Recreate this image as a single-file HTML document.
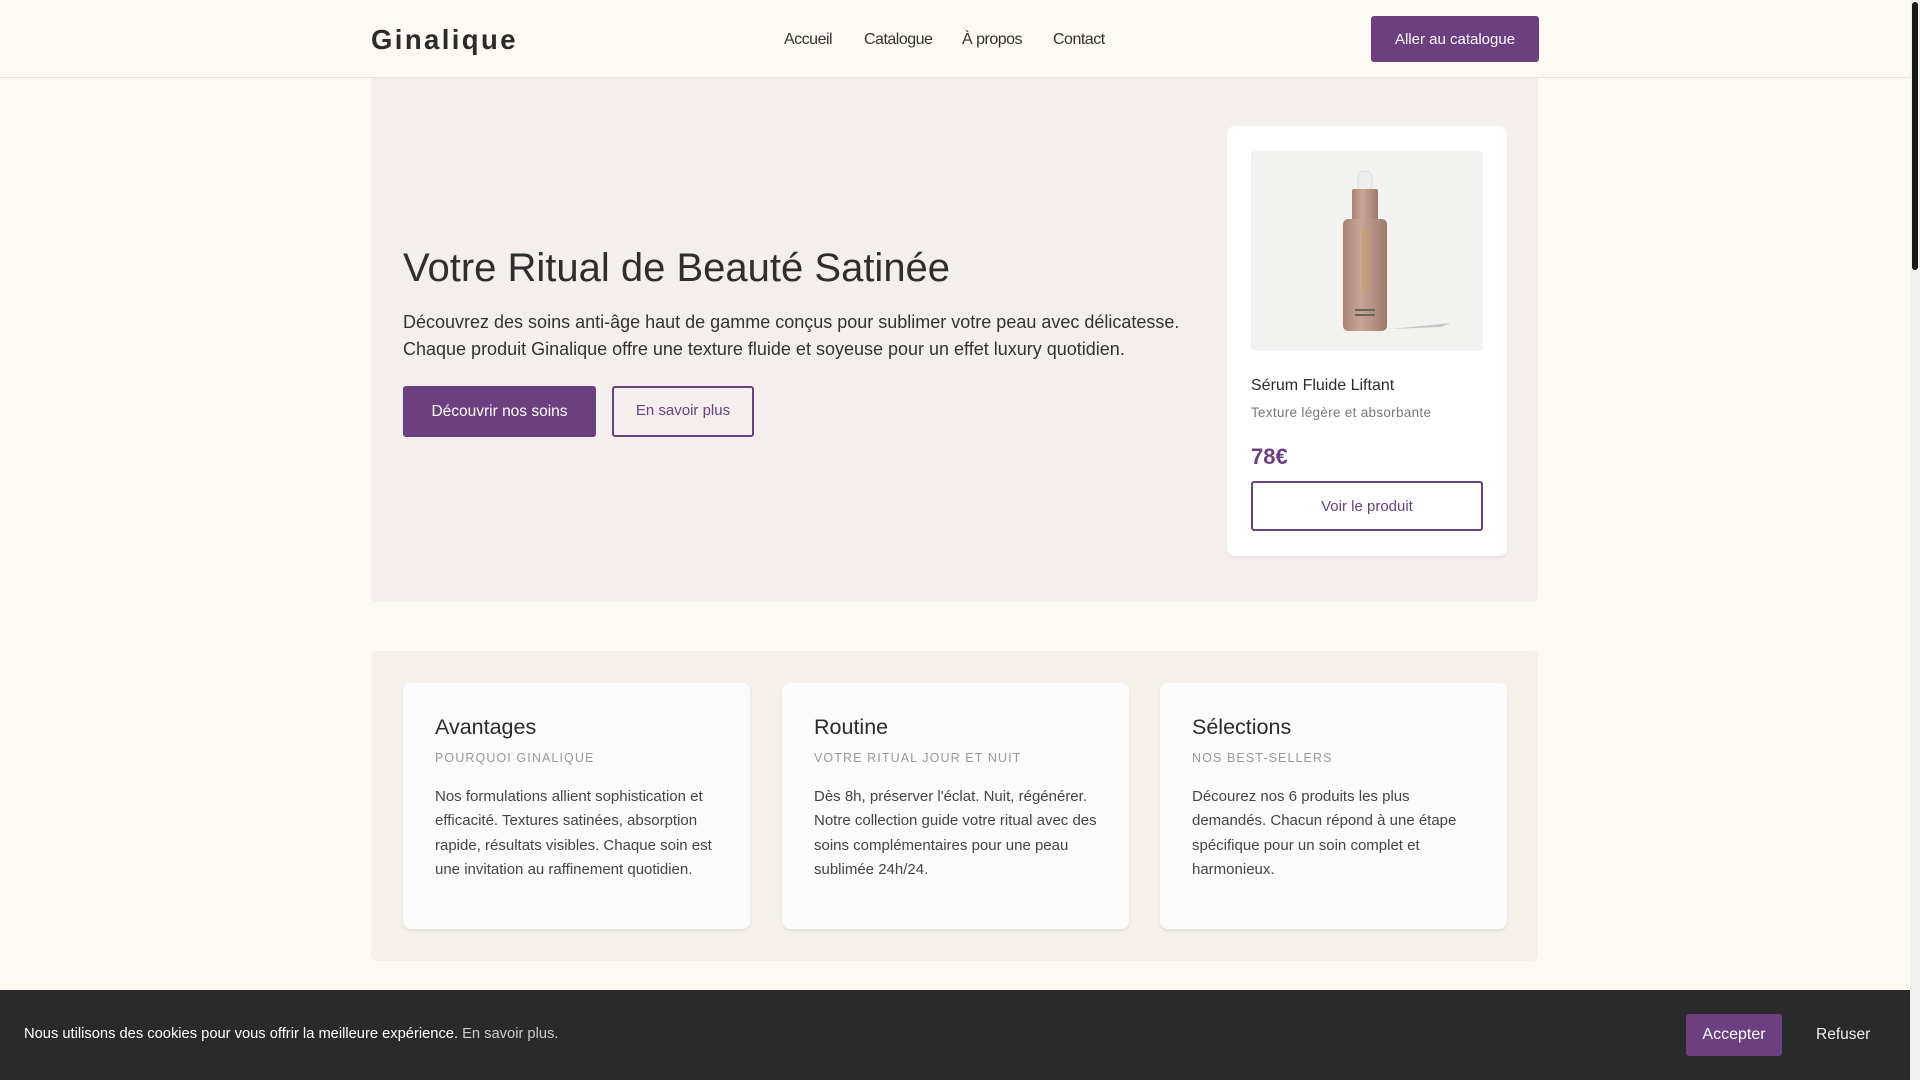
<!DOCTYPE html>
<html><head><meta charset="utf-8"><style>
*{margin:0;padding:0;box-sizing:border-box}
body{width:1920px;height:1080px;overflow:hidden;background:#fdf9f3;font-family:"Liberation Sans",sans-serif;color:#2b2b2b;position:relative}
.a{position:absolute}
.hdr{left:0;top:0;width:1910px;height:78px;border-bottom:1px solid #ece3d8;background:#fdf9f3}
.logo{left:371px;top:24px;font-size:27.5px;font-weight:bold;letter-spacing:2.4px;color:#2b2b2b}
.nav{top:31px;font-size:16px;letter-spacing:-0.5px;color:#333}
.btnp{background:#6b3f80;color:#fff;border-radius:3px;display:flex;align-items:center;justify-content:center;font-size:15px}
.hero{left:371px;top:78px;width:1167px;height:524px;background:#f4efec;border-radius:0 0 6px 6px}
h1{font-weight:normal;font-size:40px;color:#2e2e2e}
.sec{left:371px;top:651px;width:1167px;height:310px;background:#f6f0eb;border-radius:6px}
.card{top:683px;width:347px;height:246px;background:#fcfbfb;border-radius:8px;box-shadow:0 2px 3px rgba(0,0,0,.07);padding:0 32px}
.card h3{font-weight:normal;font-size:21.5px;margin-top:32px;color:#2b2b2b}
.card .s{font-size:12.5px;letter-spacing:1.1px;color:#999;margin-top:11px}
.card p{font-size:15px;line-height:24.3px;color:#444;margin-top:20px}
</style></head><body>
<div class="a hdr"></div>
<div class="a logo">Ginalique</div>
<div class="a nav" style="left:784px">Accueil</div>
<div class="a nav" style="left:864px">Catalogue</div>
<div class="a nav" style="left:962px">À propos</div>
<div class="a nav" style="left:1053px">Contact</div>
<div class="a btnp" style="left:1371px;top:16px;width:168px;height:46px">Aller au catalogue</div>

<div class="a hero"></div>
<h1 class="a" style="left:403px;top:246px">Votre Ritual de Beauté Satinée</h1>
<div class="a" style="left:403px;top:309px;font-size:18px;line-height:27px;color:#333">Découvrez des soins anti-âge haut de gamme conçus pour sublimer votre peau avec délicatesse.<br>Chaque produit Ginalique offre une texture fluide et soyeuse pour un effet luxury quotidien.</div>
<div class="a btnp" style="left:403px;top:386px;width:193px;height:51px;font-size:15.5px">Découvrir nos soins</div>
<div class="a" style="left:612px;top:386px;width:142px;height:51px;border:2px solid #6b3f80;border-radius:3px;color:#6b3f80;font-size:15px;text-align:center;padding-top:14px">En savoir plus</div>

<div class="a" style="left:1227px;top:126px;width:280px;height:430px;background:#fff;border-radius:8px;box-shadow:0 3px 2px #ece3e6"></div>
<div class="a" style="left:1251px;top:151px;width:232px;height:200px;background:#f2f2f1;border-radius:4px;overflow:hidden">
<svg width="232" height="200" viewBox="0 0 232 200">
<defs><linearGradient id="g" x1="0" x2="1"><stop offset="0" stop-color="#a88476"/><stop offset=".4" stop-color="#c9a597"/><stop offset="1" stop-color="#9c7a6c"/></linearGradient></defs>
<path d="M140 178 L200 172 L190 176 Z" fill="#aaa" opacity=".6"/>
<rect x="107" y="20" width="14" height="20" rx="6" fill="#eee" stroke="#ddd"/>
<rect x="101" y="38" width="26" height="32" rx="2" fill="url(#g)"/>
<rect x="92" y="68" width="44" height="112" rx="5" fill="url(#g)"/>
<rect x="112" y="80" width="4" height="60" fill="none" stroke="#c8a050"/>
<rect x="104" y="158" width="20" height="2" fill="#665"/><rect x="104" y="163" width="20" height="2" fill="#665"/>
</svg></div>
<div class="a" style="left:1251px;top:377px;font-size:16px;color:#2b2b2b">Sérum Fluide Liftant</div>
<div class="a" style="left:1251px;top:405px;font-size:13.5px;color:#777;letter-spacing:.3px">Texture légère et absorbante</div>
<div class="a" style="left:1251px;top:444px;font-size:22px;font-weight:bold;color:#6b3f80">78€</div>
<div class="a" style="left:1251px;top:481px;width:232px;height:50px;border:2px solid #6b3f80;border-radius:3px;color:#6b3f80;font-size:15px;text-align:center;padding-top:15px">Voir le produit</div>

<div class="a sec"></div>
<div class="a card" style="left:403px"><h3>Avantages</h3><div class="s">POURQUOI GINALIQUE</div><p>Nos formulations allient sophistication et efficacité. Textures satinées, absorption rapide, résultats visibles. Chaque soin est une invitation au raffinement quotidien.</p></div>
<div class="a card" style="left:782px"><h3>Routine</h3><div class="s">VOTRE RITUAL JOUR ET NUIT</div><p>Dès 8h, préserver l'éclat. Nuit, régénérer. Notre collection guide votre ritual avec des soins complémentaires pour une peau sublimée 24h/24.</p></div>
<div class="a card" style="left:1160px"><h3>Sélections</h3><div class="s">NOS BEST-SELLERS</div><p>Décourez nos 6 produits les plus demandés. Chacun répond à une étape spécifique pour un soin complet et harmonieux.</p></div>

<div class="a" style="left:0;top:990px;width:1910px;height:90px;background:#2a2a2a"></div>
<div class="a" style="left:24px;top:1026px;font-size:14.7px;color:#fff">Nous utilisons des cookies pour vous offrir la meilleure expérience. <span style="color:#ccc">En savoir plus.</span></div>
<div class="a btnp" style="left:1686px;top:1014px;width:96px;height:42px;font-size:16px">Accepter</div>
<div class="a" style="left:1816px;top:1026px;font-size:15.5px;color:#eee">Refuser</div>
<div class="a" style="left:1910px;top:0;width:10px;height:1080px;background:#f1f1f1"></div>
<div class="a" style="left:1912px;top:2px;width:6px;height:268px;background:#1a1a1a;border-radius:3px"></div>
</body></html>
